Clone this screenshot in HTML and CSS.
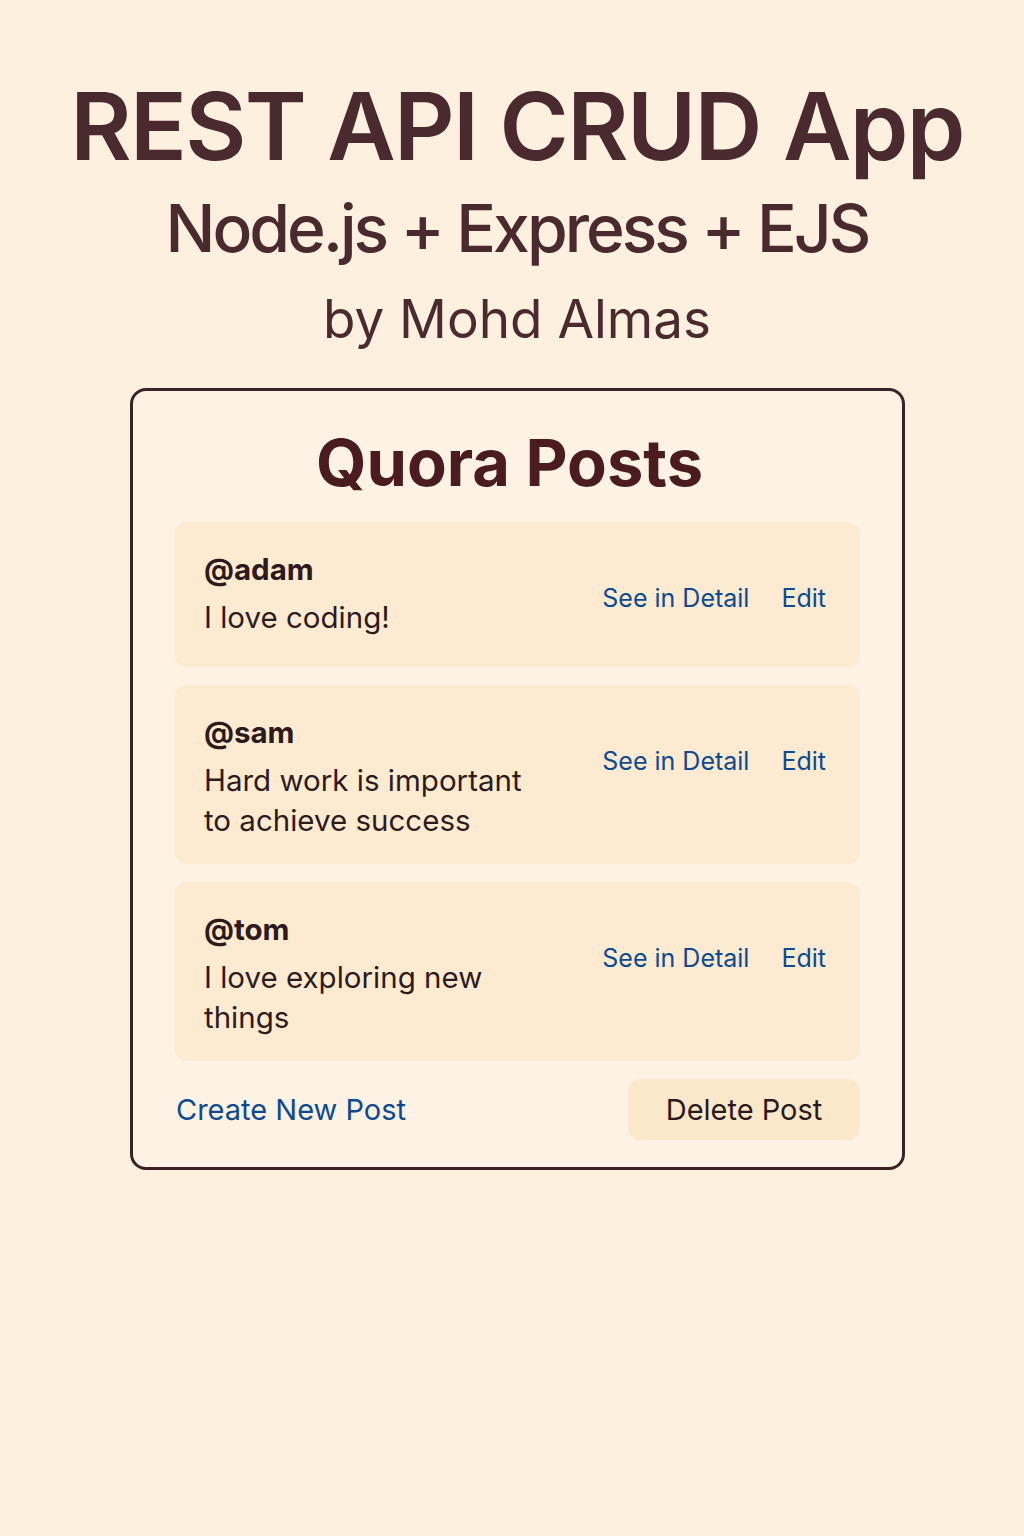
FILE: index.html
```html
<!DOCTYPE html>
<html lang="en">
<head>
<meta charset="utf-8">
<title>REST API CRUD App</title>
<link rel="stylesheet" href="styles.css">
</head>
<body>
<header class="hero">
  <h1 class="hero-title">REST API CRUD App</h1>
  <p class="hero-sub">Node.js + Express + EJS</p>
  <p class="hero-by">by Mohd Almas</p>
</header>
<main class="card">
  <h2 class="card-title">Quora Posts</h2>
  <div class="posts">
    <article class="post post-first">
      <div class="post-body">
        <div class="post-user">@adam</div>
        <div class="post-text">I love coding!</div>
      </div>
      <div class="post-links">
        <a href="#" class="link">See in Detail</a>
        <a href="#" class="link">Edit</a>
      </div>
    </article>
    <article class="post">
      <div class="post-body">
        <div class="post-user">@sam</div>
        <div class="post-text">Hard work is important to achieve success</div>
      </div>
      <div class="post-links">
        <a href="#" class="link">See in Detail</a>
        <a href="#" class="link">Edit</a>
      </div>
    </article>
    <article class="post">
      <div class="post-body">
        <div class="post-user">@tom</div>
        <div class="post-text">I love exploring new things</div>
      </div>
      <div class="post-links">
        <a href="#" class="link">See in Detail</a>
        <a href="#" class="link">Edit</a>
      </div>
    </article>
  </div>
  <div class="card-footer">
    <a href="#" class="link link-create">Create New Post</a>
    <button class="btn-delete" type="button">Delete Post</button>
  </div>
</main>
</body>
</html>
```
FILE: styles.css
```css
html, body {
  margin: 0;
  padding: 0;
}
body {
  background: #fdf0df;
  font-family: Inter, "Noto Sans", "Liberation Sans", sans-serif;
  color: #3a2024;
  min-height: 1536px;
}
.hero {
  text-align: center;
  padding-top: 69px;
  padding-left: 10px;
}
.hero-title {
  margin: 0;
  font-size: 94px;
  font-weight: 600;
  line-height: 114px;
  color: #4a2a2e;
  letter-spacing: -1.6px;
}
.hero-sub {
  margin: 5px 0 0;
  font-size: 66px;
  font-weight: 500;
  line-height: 80px;
  color: #4a2a2e;
  letter-spacing: -3px;
}
.hero-by {
  margin: 20px 0 0;
  font-size: 53px;
  font-weight: 400;
  line-height: 62px;
  color: #4a2a2e;
}
.card {
  width: 775px;
  box-sizing: border-box;
  margin: 38px 0 0 calc(50% - 382px);
  border: 3px solid #3b2226;
  border-radius: 16px;
  background: #fdf2e3;
  padding: 33px 42px 27px;
}
.card-title {
  margin: 0 0 0 -16px;
  text-align: center;
  font-size: 65px;
  font-weight: 700;
  line-height: 77px;
  color: #4a1c1f;
}
.posts {
  margin-top: 21px;
  display: flex;
  flex-direction: column;
  gap: 18px;
}
.post {
  display: flex;
  justify-content: space-between;
  align-items: flex-start;
  background: #fcebd1;
  border-radius: 12px;
  padding: 27px 34px 24px 29px;
}
.post-first {
  min-height: 94px;
}
.post-body {
  width: 340px;
}
.post-user {
  font-size: 29.5px;
  font-weight: 700;
  line-height: 40px;
  color: #2e1a1c;
}
.post-text {
  margin-top: 8px;
  font-size: 29.5px;
  font-weight: 400;
  line-height: 40px;
  color: #2e1a1c;
}
.post-links {
  margin-top: 29px;
  display: flex;
  gap: 32px;
}
.link {
  color: #0d4a91;
  text-decoration: none;
  font-size: 25px;
  line-height: 40px;
}
.card-footer {
  margin-top: 18px;
  display: flex;
  justify-content: space-between;
  align-items: center;
}
.link-create {
  font-size: 29px;
  margin-left: 1px;
}
.btn-delete {
  width: 232px;
  height: 61px;
  border: none;
  border-radius: 12px;
  background: #fbe8cb;
  font-family: inherit;
  font-size: 29px;
  color: #2a1a1c;
  cursor: pointer;
}
```
